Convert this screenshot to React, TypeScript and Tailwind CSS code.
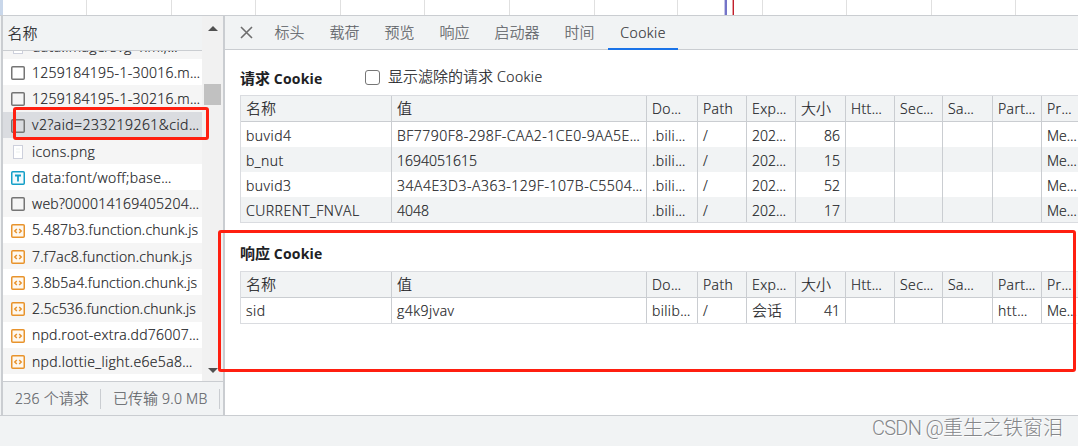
import type { ReactNode } from 'react';
import clsx from 'clsx';

type FileKind = 'doc' | 'image' | 'font' | 'script';

interface RequestItem {
    name: string;
    kind: FileKind;
    tracking?: string;
    selected?: boolean;
}

interface CookieRow {
    name: string;
    value: string;
    domain: string;
    path: string;
    expires: ReactNode;
    size: number;
    partition?: string;
    priority: string;
}

const REQUESTS: RequestItem[] = [
    { name: 'data:image/svg+xml;…', kind: 'image', tracking: 'tracking-[0.4px]' },
    { name: '1259184195-1-30016.m…', kind: 'doc', tracking: 'tracking-[0.27px]' },
    { name: '1259184195-1-30216.m…', kind: 'doc', tracking: 'tracking-[0.27px]' },
    { name: 'v2?aid=233219261&cid…', kind: 'doc', tracking: 'tracking-[0.48px]', selected: true },
    { name: 'icons.png', kind: 'image', tracking: 'tracking-[0.35px]' },
    { name: 'data:font/woff;base…', kind: 'font', tracking: 'tracking-[0.42px]' },
    { name: 'web?000014169405204…', kind: 'doc', tracking: 'tracking-[0.27px]' },
    { name: '5.487b3.function.chunk.js', kind: 'script', tracking: 'tracking-[0.2px]' },
    { name: '7.f7ac8.function.chunk.js', kind: 'script', tracking: 'tracking-[0.2px]' },
    { name: '3.8b5a4.function.chunk.js', kind: 'script', tracking: 'tracking-[0.18px]' },
    { name: '2.5c536.function.chunk.js', kind: 'script', tracking: 'tracking-[0.18px]' },
    { name: 'npd.root-extra.dd76007…', kind: 'script', tracking: 'tracking-[0.25px]' },
    { name: 'npd.lottie_light.e6e5a8…', kind: 'script', tracking: 'tracking-[0.35px]' },
    { name: '', kind: 'doc' },
];

const TABS = ['标头', '载荷', '预览', '响应', '启动器', '时间'];

const REQUEST_COOKIES: CookieRow[] = [
    { name: 'buvid4', value: 'BF7790F8-298F-CAA2-1CE0-9AA5E…', domain: '.bili…', path: '/', expires: '202…', size: 86, priority: 'Me…' },
    { name: 'b_nut', value: '1694051615', domain: '.bili…', path: '/', expires: '202…', size: 15, priority: 'Me…' },
    { name: 'buvid3', value: '34A4E3D3-A363-129F-107B-C5504…', domain: '.bili…', path: '/', expires: '202…', size: 52, priority: 'Me…' },
    { name: 'CURRENT_FNVAL', value: '4048', domain: '.bili…', path: '/', expires: '202…', size: 17, priority: 'Me…' },
];

const Zh = ({ children }: { children: ReactNode }) => <span className="text-[15px] tracking-normal">{children}</span>;

const RESPONSE_COOKIES: CookieRow[] = [
    { name: 'sid', value: 'g4k9jvav', domain: 'bilib…', path: '/', expires: <Zh>会话</Zh>, size: 41, partition: 'htt…', priority: 'Me…' },
];

// x of each tick in the waterfall overview
const TICKS = [86, 171, 255, 340, 424, 509, 594, 677, 762, 846, 931, 1015];

const Overview = () => (
    <svg className="block h-[15px] w-full" shapeRendering="crispEdges">
        <rect width="3" height="15" fill="#c9d7ea" />
        {TICKS.map((x) => (
            <rect key={x} x={x} width="1" height="15" fill="#e0e0e0" />
        ))}
        <rect x="724" width="1" height="15" fill="#c5c5e8" />
        <rect x="725" width="2" height="15" fill="#7474c8" />
        <rect x="732" width="1" height="15" fill="#e8a0a0" />
        <rect x="733" width="1" height="15" fill="#c01f2e" />
    </svg>
);

const FileIcon = ({ kind }: { kind: FileKind }) => {
    if (kind === 'image') {
        return (
            <svg className="h-3.5 w-3.5 shrink-0" viewBox="0 0 14 14">
                <rect x="2.5" y="0.5" width="9" height="13" fill="#fff" stroke="#cdd0dc" />
                <path d="M5 4h4M5 7h4" stroke="#edf2f0" />
            </svg>
        );
    }
    if (kind === 'font') {
        return (
            <svg className="h-3.5 w-3.5 shrink-0" viewBox="0 0 14 14" fill="none" stroke="#149fc8">
                <rect x="0.75" y="0.75" width="12.5" height="12.5" rx="1" strokeWidth="1.5" fill="#f3fafd" />
                <path d="M4 4.5h6M7 4.5v6" strokeWidth="1.8" />
            </svg>
        );
    }
    if (kind === 'script') {
        return (
            <svg className="h-3.5 w-3.5 shrink-0" viewBox="0 0 14 14" fill="none" stroke="#e8932c">
                <rect x="0.75" y="0.75" width="12.5" height="12.5" rx="1" strokeWidth="1.5" fill="#fef8ef" />
                <path d="M5.8 5 3.8 7l2 2M8.2 5l2 2-2 2" strokeWidth="1.5" />
            </svg>
        );
    }
    return (
        <svg className="h-3.5 w-3.5 shrink-0" viewBox="0 0 14 14">
            <rect x="0.75" y="0.75" width="12.5" height="12.5" rx="1" fill="none" stroke="#757575" strokeWidth="1.5" />
        </svg>
    );
};

const Sidebar = () => (
    <aside className="flex w-[224px] shrink-0 flex-col border-x-2 border-[#cacdd1]">
        <div className="flex h-[365px]">
            <div className="flex w-[199px] flex-col">
                <div className="flex h-[35px] shrink-0 items-center border-b border-[#cacdd1] bg-[#f1f3f4] pl-[4.5px]">
                    <Zh>名称</Zh>
                </div>
                <div className="min-h-0 flex-1 overflow-hidden">
                    <ul className="-mt-[18.25px]">
                        {REQUESTS.map((r, i) => (
                            <li
                                key={i}
                                className={clsx(
                                    'flex h-[26.25px] items-center gap-[7px] whitespace-nowrap pl-2',
                                    r.selected ? 'bg-[#dadce0]' : i % 2 === 0 ? 'bg-[#f5f5f5]' : 'bg-white'
                                )}
                            >
                                {r.name && (
                                    <>
                                        <span className="pt-0.5"><FileIcon kind={r.kind} /></span>
                                        <span className={clsx('pt-[1.5px]', r.tracking)}>{r.name}</span>
                                    </>
                                )}
                            </li>
                        ))}
                    </ul>
                </div>
            </div>
            <div className="flex flex-1 flex-col items-center bg-[#f1f1f1] pt-[10px] pb-2">
                <svg className="h-[5px] w-[10px] shrink-0" viewBox="0 0 10 5"><path d="M0 5 5 0l5 5z" fill="#505050" /></svg>
                <div className="mt-[53px] h-[21px] w-[17px] bg-[#c1c1c1]" />
                <svg className="mt-auto h-[5px] w-[10px] shrink-0" viewBox="0 0 10 5"><path d="M0 0h10L5 5z" fill="#505050" /></svg>
            </div>
        </div>
        <div className="flex flex-1 items-center whitespace-nowrap border-t border-[#cacdd1] bg-[#f1f3f4] text-[#5f6368]">
            <div className="w-[97px] pl-3 tracking-[0.3px]">236 <Zh>个请求</Zh></div>
            <div className="h-5 w-px bg-[#cacdd1]" />
            <div className="w-[118px] pl-3 tracking-[0.3px]"><Zh>已传输</Zh> 9.0 MB</div>
            <div className="h-5 w-px bg-[#cacdd1]" />
        </div>
    </aside>
);

const COLS = 'grid grid-cols-[151px_255px_51px_49px_49px_50px_49px_48px_50px_49px_41px]';
const CELL = 'overflow-hidden whitespace-nowrap border-r border-[#cacdd1] pl-[5px]';

const CookieTable = ({ rows }: { rows: CookieRow[] }) => (
    <div className="w-[843px] border border-[#dadce0]">
        <div className={clsx(COLS, 'h-[26px] border-b border-[#cacdd1] bg-[#f1f3f4] leading-[25px] tracking-[0.4px]')}>
            <div className={CELL}><Zh>名称</Zh></div>
            <div className={CELL}><Zh>值</Zh></div>
            <div className={CELL}>Do…</div>
            <div className={CELL}>Path</div>
            <div className={CELL}>Exp…</div>
            <div className={CELL}><Zh>大小</Zh></div>
            <div className={CELL}>Htt…</div>
            <div className={CELL}>Sec…</div>
            <div className={CELL}>Sa…</div>
            <div className={CELL}>Part…</div>
            <div className={CELL}>Pr…</div>
        </div>
        {rows.map((c) => (
            <div key={c.name} className={clsx(COLS, 'h-[25px] odd:bg-[#f1f3f4]', rows.length > 1 ? 'leading-[27px]' : 'leading-[25px]')}>
                <div className={clsx(CELL, 'tracking-[0.5px]')}>{c.name}</div>
                <div className={clsx(CELL, !/^\d+$/.test(c.value) && 'tracking-[0.5px]')}>{c.value}</div>
                <div className={clsx(CELL, 'tracking-[0.4px]')}>{c.domain}</div>
                <div className={CELL}>{c.path}</div>
                <div className={CELL}>{c.expires}</div>
                <div className={clsx(CELL, 'pr-[5px] text-right')}>{c.size}</div>
                <div className={CELL} />
                <div className={CELL} />
                <div className={CELL} />
                <div className={clsx(CELL, 'tracking-[0.5px]')}>{c.partition}</div>
                <div className={CELL}>{c.priority}</div>
            </div>
        ))}
    </div>
);

const Details = () => (
    <main className="flex min-w-0 flex-1 flex-col overflow-hidden bg-white">
        <nav className="flex h-[34px] shrink-0 border-b border-[#cacdd1] bg-[#f1f3f4] text-[#5f6368]">
            <div className="flex w-[37px] items-center pl-[15px]">
                <svg className="h-[13px] w-[13px]" viewBox="0 0 13 13"><path d="m1 1 11 11M12 1 1 12" stroke="#6e6e6e" strokeWidth="1.6" /></svg>
            </div>
            {TABS.map((tab) => (
                <div key={tab} className="flex items-center px-[12.5px] pb-0.5 text-[15px]">{tab}</div>
            ))}
            <div className="-mb-px ml-px flex w-[70px] items-center justify-center border-b-2 border-[#1a73e8] pt-0.5 tracking-[0.45px] text-[#303134]">
                Cookie
            </div>
        </nav>
        <section className="pl-[15px]">
            <div className="flex h-[45px] items-center pt-[9px]">
                <h2 className="w-[125px] pt-0.5 font-bold tracking-[0.2px] [-webkit-text-stroke:0]"><Zh>请求</Zh> Cookie</h2>
                <label className="flex items-center gap-2">
                    <span className="h-[15px] w-[15px] rounded-[3px] border border-[#767676] bg-white" />
                    <span className="pb-0.5 tracking-[0.45px]"><Zh>显示滤除的请求</Zh> Cookie</span>
                </label>
            </div>
            <CookieTable rows={REQUEST_COOKIES} />
        </section>
        <section className="pl-[15px]">
            <div className="flex h-12 items-center pt-[13px]">
                <h2 className="font-bold tracking-[0.2px] [-webkit-text-stroke:0]"><Zh>响应</Zh> Cookie</h2>
            </div>
            <CookieTable rows={RESPONSE_COOKIES} />
        </section>
    </main>
);

const App = () => (
    <div className="relative flex h-[446px] w-[1078px] flex-col overflow-hidden bg-white font-['Open_Sans','Noto_Sans_CJK_SC',sans-serif] text-[14px] leading-5 font-light text-[#202124] [-webkit-text-stroke:0.2px]">
        <Overview />
        <div className="flex h-[401px] border-y border-[#cacdd1] bg-[#f1f3f4] pl-px">
            <Sidebar />
            <Details />
        </div>
        <footer className="flex flex-1 items-center justify-end bg-[#f1f3f4] pr-[15px] pb-1.5">
            <span className="whitespace-nowrap font-['Roboto','Noto_Sans_CJK_SC',sans-serif] text-[20px] leading-none text-[#85878a] [-webkit-text-stroke:0] [text-shadow:1px_1px_0_#ffffff]">
                <span className="tracking-[-0.7px]">CSDN @</span>重生之铁窗泪
            </span>
        </footer>

        {/* highlight boxes drawn over the panels */}
        <div className="absolute top-[107px] left-[13px] h-[33px] w-[196px] rounded-[3px] border-3 border-[#ff1f10]" />
        <div className="absolute top-[230px] left-[218px] h-[142px] w-[858px] rounded-[3px] border-3 border-[#ff1f10]" />
    </div>
);

export default App;
